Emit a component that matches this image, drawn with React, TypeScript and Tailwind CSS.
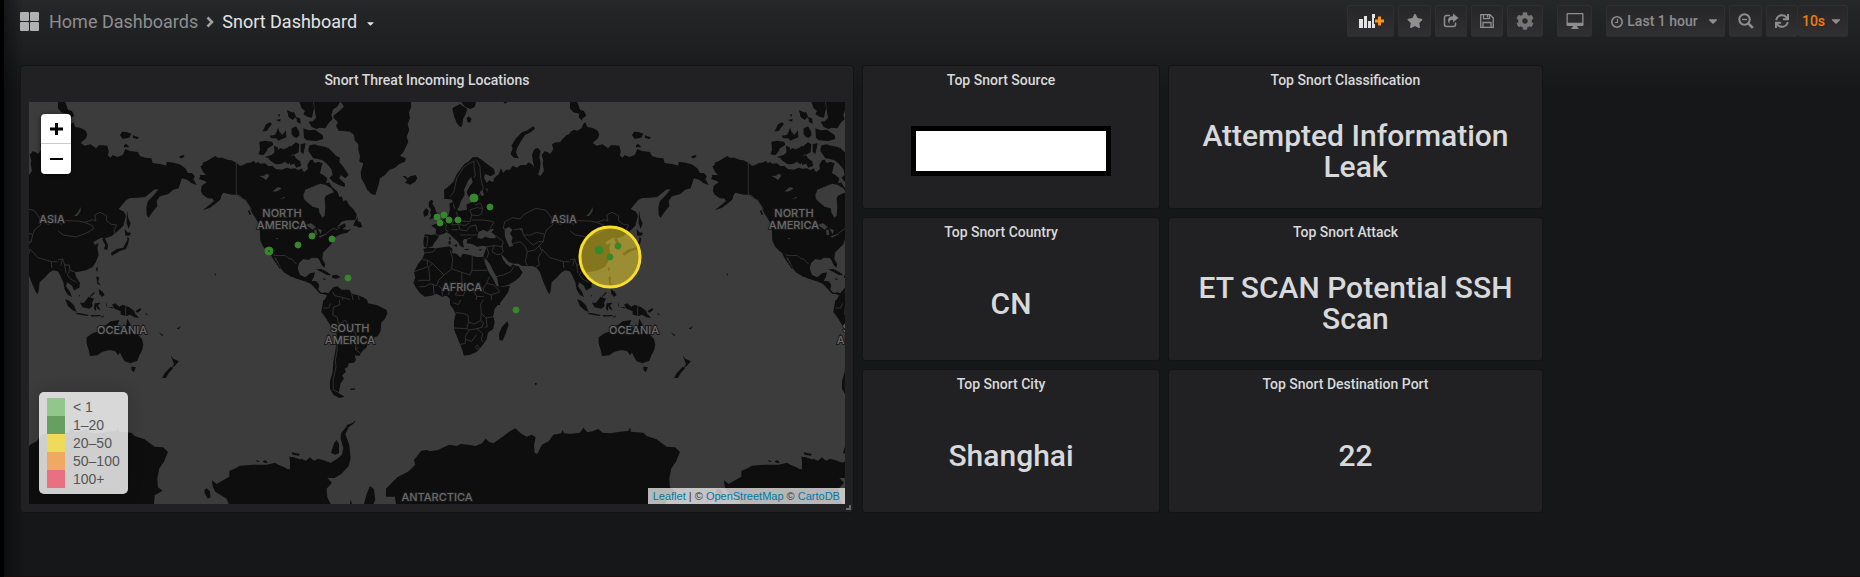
import React from "react";
import { FaStar, FaCog, FaCaretDown, FaSync } from "react-icons/fa";

type Point = { x: number; y: number; r: number };

const markers: Point[] = [
  { x: 269, y: 251, r: 4 },
  { x: 298, y: 245, r: 3 },
  { x: 312, y: 236, r: 3 },
  { x: 332, y: 239, r: 3 },
  { x: 348, y: 278, r: 3 },
  { x: 474, y: 198, r: 4 },
  { x: 490, y: 207, r: 3 },
  { x: 437, y: 217, r: 3 },
  { x: 444, y: 215, r: 3 },
  { x: 449, y: 220, r: 3 },
  { x: 440, y: 223, r: 3 },
  { x: 458, y: 220, r: 3 },
  { x: 516, y: 310, r: 3 },
  { x: 599, y: 250, r: 4 },
  { x: 618, y: 246, r: 3 },
  { x: 610, y: 257, r: 3 },
];

const legend = [
  { label: "< 1", swatch: "bg-[#92c78b]" },
  { label: "1–20", swatch: "bg-[#679f60]" },
  { label: "20–50", swatch: "bg-[#eedb59]" },
  { label: "50–100", swatch: "bg-[#f1a961]" },
  { label: "100+", swatch: "bg-[#e9707f]" },
];

type Tile = { x: number; y: number; land: string; water?: string; borders?: string };

// Coastlines are stored in third-of-a-pixel units, one tile per map region.
// Neighbouring tiles overlap slightly so that no seam shows between them.
const tiles: Tile[] = [
  {
    // Alaska, western Canada and the western United States
    x: 20,
    y: 95,
    land:
      "M541 214L549 210 547 204 565 196 577 188 586 183 592 188 607 188 622 194 635 196 649 203 660 212 668 211 680 204 690 203 702 198 707 204 716 201 720 206 735 205 745 213 757 213 768 222 785 224 800 218 814 222V545L800 537 790 530 782 518 775 503 768 489 757 479 742 468 730 455 721 437 720 410 717 388 706 368 695 352 688 332 677 317 662 307 648 299 636 299 622 296 610 293 604 302 601 314 586 326 570 338 549 345 568 330 582 318 578 311 562 309 547 298 543 288 545 272 560 262 555 258 536 252 541 246 539 240 558 240 550 232Z" +
      "M750 474L760 480 768 496 776 510 784 523 778 520 766 502 757 488Z" +
      "M718 140L735 137 757 140 760 150 744 160 738 172 730 181 715 178 720 165Z" +
      "M762 152L772 156 776 166 780 158 790 163 800 160 810 152 822 158 820 175 812 185 817 196 805 208 794 200 783 207 768 208 752 198 745 190 735 186 755 180 764 172Z" +
      "M748 122L765 120 775 98 777 108 787 120 798 106 799 127 788 131 775 137 768 130 754 130Z" +
      "M728 109L738 88 750 82 756 87 747 98 740 108ZM801 45L822 55 826 68 818 74 806 67ZM768 75L782 72 780 80ZM773 59L781 57 777 65ZM815 100L825 96 834 104 835 122 822 126 815 118ZM688 345L693 358 689 360 684 348Z" +
      "M583 535l6 3-2 4z",
    water:
      "M718 243L732 242 740 236 748 240 744 248 738 255 730 249ZM747 293L760 287 772 277 785 279 778 286 766 290 758 288ZM778 311L795 306 795 309ZM810 330L817 319 815 330ZM768 430h6v2h-6z",
    borders: "M649 203V299L660 303 668 312 676 315 684 328 694 342M760 480L775 482 795 481 803 488 810 492",
  },
  {
    // Eastern North America, the Atlantic, Europe, Africa and western Asia
    x: 290,
    y: 95,
    land:
      "M0 222L15 220 25 226 35 220 42 232 54 222 52 210 60 195 68 194 74 204 85 200 98 205 95 214 90 235 100 240 112 250 108 265 118 262 126 276 143 290 148 306 155 304 160 318 170 316 177 330 190 342 200 358 198 372 190 376 170 376 155 380 138 400 150 392 165 385 168 394 158 402 172 405 184 402 172 413 152 418 140 424 130 430 124 448 112 460 99 473 97 492 106 508 103 518 95 510 88 494 82 489 66 488 55 495 40 492 27 505 23 520 30 540 46 547 60 535 75 532 72 545 65 558 80 559 88 570 85 584 95 594 108 592 118 597 114 603 104 598 90 596 75 580 63 567 48 560 30 554 14 549 0 543Z" +
      "M57 152L72 148 88 152 104 155 116 160 128 172 138 182 150 188 148 200 160 215 176 240 166 250 152 240 148 250 165 266 164 276 146 270 128 260 118 248 128 240 124 222 112 208 98 196 84 192 70 190 62 178 55 168Z" +
      "M190 392L195 378 204 366 203 378 212 382 217 396 208 398 200 394Z" +
      "M28 21H70L72 40 66 68 54 66 40 58 45 48 35 40Z" +
      "M72 21H150L142 35 130 42 124 60 128 72 116 84 106 100 88 98 80 102 65 96 56 80 70 78 78 68 74 45ZM40 100L56 106 75 104 98 120 100 132 80 138 50 136 42 128ZM5 152L18 142 28 148 26 172 10 180ZM32 148L47 144 44 160 40 178 32 170ZM0 185L12 180 20 192 30 198 34 212 20 218 12 206 0 210ZM6 102L18 94 28 110 28 122 18 130 8 118ZM0 60L12 50 18 65 8 74ZM18 66l12 4 2 16-10-4z" +
      "M78 523L95 522 112 531 124 541 110 540 96 532ZM127 541L140 539 152 547 138 551 126 548ZM98 550l12 2-8 3z" +
      "M152 21H363L364 35 357 52 360 70 353 88 358 105 350 125 355 140 346 160 340 172 330 182 348 190 345 200 328 207 315 218 298 225 285 240 270 250 265 272 256 300 244 297 232 285 224 268 214 250 212 232 220 205 208 200 210 182 205 165 205 148 194 136 192 120 180 110 160 108 146 107 138 92 144 82 132 70 130 62 148 48 162 35Z" +
      "M338 244L346 242 352 250 362 244 376 240 382 248 376 260 360 269 345 263 352 255Z" +
      "M100 630L105 612 118 590 130 577 142 574 155 584 178 584 185 596 205 601 222 608 232 615 232 630Z" +
      "M487 40L500 32 510 27 520 34 532 42 526 60 520 70 516 94 510 96 500 84 492 62ZM514 21H558L554 36 542 42 526 36ZM530 68L537 64 545 72 540 84 532 80ZM640 21h12l-6 5z" +
      "M662 178L668 160 664 152 678 130 696 112 712 106 730 94 735 101 722 112 705 120 692 140 682 158 678 172 686 190 672 188Z" +
      "M463 312L462 285 478 272 490 260 500 238 512 222 524 206 535 200 548 187 562 186 575 194 590 206 612 222 615 236 602 244 585 236 582 248 590 264 598 256 610 262 612 250 626 238 633 220 640 234 648 224 660 224 668 212 680 218 692 210 708 210 716 202 728 210 734 220 730 205 726 180 732 164 742 158 752 168 748 186 752 204 750 222 744 240 752 242 762 228 758 206 760 196 755 180 765 168 782 176 790 162 786 148 798 142 810 142 818 132 830 120 844 114V530L826 526 815 532 800 548 785 562 782 588 778 598 772 588 760 560 750 532 740 518 728 513 695 513 683 507 692 524 698 532 690 545 675 558 655 570 627 576 618 558 605 535 592 508 584 494 580 484 590 455 580 452 562 455 548 448 530 445 532 432 522 432 518 440 522 458 510 452 504 438 494 428 482 408 486 414 500 425 516 442 510 450 506 442 492 430 480 418 470 412 462 416 448 420 444 430 432 445 428 454 412 458 402 455 400 440 404 418 425 420 437 418 438 402 424 392 436 386 446 384 460 372 475 362 480 344 478 326 488 320 492 340 508 348 530 344 530 328 546 322 570 312 550 308 535 304 530 292 538 275 548 262 544 246 535 256 528 272 522 284 524 300 514 316 506 338 498 346 492 330 486 314 474 312Z" +
      "M417 320L424 314 430 318 427 326 435 338 438 350 448 358 442 368 428 370 417 374 424 362 420 352 424 345 416 334ZM400 350L408 340 416 346 414 360 402 366Z" +
      "M490 450L502 448 500 456ZM476 438h6v10h-6zM478 426h4v8h-4zM524 462h12v3h-12zM565 464l12-3-6 6z" +
      "M400 462L415 458 440 460 478 454 488 462 485 474 500 476 512 488 518 476 540 480 560 486 580 486 584 500 596 530 612 556 620 574 635 576 660 572 655 590 644 606 630 625V630H480L480 612 470 602 455 605 440 596 425 602 404 605 390 594 378 578 370 564 376 548 372 530 384 508 398 490 404 474Z",
    water:
      "M40 300L46 284 66 276 80 270 92 266 108 270 124 280 132 292 120 296 108 302 104 310 106 335 104 362 97 368 88 352 86 340 68 335 52 322 42 312ZM100 216l8 10-6 8z" +
      "M562 428L565 412 580 404 592 410 602 402 612 402 604 412 618 422 616 430 600 430 586 425 574 432Z" +
      "M644 402L656 396 668 404 660 415 668 428 664 440 670 452 658 456 650 438 645 425Z" +
      "M634 478L645 488 656 500 670 506 686 506 695 513 680 514 668 508 662 516 648 506 638 492Z" +
      "M586 490L600 508 612 532 622 550 626 574 620 572 608 548 594 526 584 500ZM570 290l8-4 4 14-8 4zM586 282l6-2 2 10zM688 402l8-2-2 8zM48 390L62 384 78 396 68 404ZM72 404L80 404 82 420 74 420ZM82 400L96 406 92 418ZM86 424L108 416 110 418 90 428Z",
    borders:
      "M0 490L8 494 18 506M108 416L130 400 142 404 150 396M480 305L492 290 500 250 520 218 540 204 552 198M552 198L552 215 556 240 552 248M560 194L570 215 572 250 580 280 566 302" +
      "M500 350L503 368 492 375 485 390M503 368L515 378 540 380 545 360 540 345M540 345L560 338 578 340 575 356 565 362 545 360M578 340L572 325 555 330M545 375L580 375 600 378 612 382 600 400M485 390L505 388 525 392 538 384M505 388L510 404 530 408 540 394 558 390 562 410M485 404L505 404M510 420L530 420 560 420M460 378L470 390 466 404 475 410M404 424L414 426 410 455M436 418L446 422M532 432L545 428M530 345L526 332" +
      "M640 400L644 380 668 368 690 372 702 358 718 350 738 340 768 346 778 360 788 372 802 385 812 388M812 388L826 380 840 384M784 372L788 390 772 402 764 418 740 412 722 420 700 420 696 400 672 405M700 420L712 435 730 450 745 440 760 440 764 418M668 446L690 440 704 452 712 470 706 500 712 512M712 470L735 465 748 452 760 440M748 452L756 470 744 488 748 510 738 516M756 462L780 488 820 500 840 500M820 500L822 520M618 422L640 440 636 455 640 470 632 478M590 455L612 452 638 455M590 455L596 475 590 490M612 452L606 470 620 478 632 478M618 545L640 540 662 530 672 514M660 415L640 400" +
      "M404 474L430 470 438 460M398 494L412 496 412 516 372 530M412 496L428 506 462 540 485 522 488 490 480 465M428 506L416 516 420 556 384 556M462 540L446 556 440 572 420 566 405 575 388 575M485 522L515 532 540 540 546 526 547 482M547 526H592M515 532L516 560 505 578 480 575 455 580 446 572M516 560L526 586 548 582 560 575 580 580 590 565 598 545M505 578L496 600 520 602 526 586M590 565L612 570 630 590 604 600 582 592 580 580M604 600L606 630M548 582L560 604 582 605M455 580L458 602M430 570L432 598M480 575L476 600M560 604L556 625M128 590L134 602 160 608 154 622M185 596L190 618M205 601L208 616M160 608L180 614",
  },
  {
    // Eastern Siberia
    x: 570,
    y: 95,
    land:
      "M0 112L12 104 22 107 35 100 40 86 46 82 52 96 66 98 82 106 88 118 84 130 68 144 80 152 98 148 114 160 124 150 148 152 152 168 150 182 158 188 164 180 178 186 194 180 202 162 216 168 240 171 246 183 262 188 280 190 284 204 310 208 325 212 326 200 346 203 365 208 382 220 390 234 402 234 411 244 406 252 416 270 400 264 388 254 372 250 368 262 362 280 346 284 330 298 306 304 296 318 298 334 284 350 272 368 266 360 265 338 270 318 286 302 302 282 288 284 262 306 240 308 216 309 204 316 182 342 198 350 204 362 196 392 180 408 160 424 142 430 130 428 118 434 106 442 110 450 122 444 118 458 122 480 114 500 104 516 84 526 62 530 50 532 56 548 66 564 64 578 48 586 42 572 28 562 24 574 36 590 42 606 30 600 20 584 16 562 6 540 0 530Z" +
      "M186 120L192 110 206 111 220 116 214 128 194 132ZM224 121L242 127 240 133 226 129ZM198 150L206 147 214 157 198 157ZM362 185L376 180 380 186 370 190Z" +
      "M0 21H22L30 44 42 48 49 62 40 68 34 76 26 66 28 56 10 52 0 40Z" +
      "M132 432L140 428 150 450 148 465 138 462 142 450ZM158 475L176 462 196 458 208 435 208 426 214 430 210 448 204 462 186 468 162 482ZM200 402L208 412 220 414 214 422 202 422ZM207 346L211 370 218 385 212 402 206 385Z" +
      "M116 516L120 518 118 530 114 526ZM115 545L123 545 121 562 130 572 118 566ZM122 582L134 590 140 600 132 606 124 596ZM108 590l-12 14 2 2 12-12zM62 600h4v6z",
    borders:
      "M0 384L12 388 24 376 44 378 60 378 80 382 104 374 114 378 110 360 126 352 146 362 146 378 160 388 176 390 168 406 172 418M0 408L16 420 54 426 90 412 108 400 100 390 80 382M0 494L14 492 20 510 34 510 36 526 50 530M14 492L8 512M36 526L28 540 38 552 56 562M20 510L24 534",
    water: "M48 364L60 352 68 336 68 348 58 362Z",
  },
  {
    // Oceania
    x: 532,
    y: 300,
    land:
      "M135 -2L148 2 162 16 170 36 160 32 144 18ZM165 38L182 40 206 45 204 48 172 43ZM180 8L192 8 206 -10 222 -4 216 8 218 18 208 26 188 22ZM224 10L242 8 234 16 242 30 234 28 229 18 228 34 222 26ZM212 46l30-1v3l-28 2zM240 52l12-6-2 6zM258 6l4 14-4-4zM262 22h22l-8 3z" +
      "M276 14L286 10 298 20 308 14 328 22 342 32 346 42 358 54 344 52 330 44 320 48 302 44 302 34 284 26ZM346 34L362 24 364 30 352 38ZM376 38l8 6-4 2zM400 50l8 6zM425 72l6 8zM470 86L484 78 476 88ZM416 96L430 106 426 108Z" +
      "M200 112L218 100 236 94 248 80 262 72 272 64 298 60 292 76 310 88 318 78 322 56 332 74 336 86 350 98 366 118 370 134 366 152 358 166 352 182 332 190 314 184 306 170 300 158 294 166 286 154 268 150 246 156 232 166 210 168 206 150 200 130Z" +
      "M333 200L348 201 342 216 336 212ZM452 166L460 176 477 184 464 198 455 204 462 192ZM452 200L460 204 446 220 438 234 426 233 434 220Z",
    borders: "M317 20V48",
  },
  {
    // South America, southern Africa and Antarctica around the prime meridian
    x: 290,
    y: 300,
    land:
      "M100 0H230L234 10 262 16 290 30 292 42 284 58 274 68 272 92 264 108 246 114 236 124 230 142 218 152 208 168 194 166 198 180 192 188 176 190 174 200 164 206 168 216 156 226 162 236 152 250 148 270 146 280 164 290 148 294 130 284 120 266 120 244 128 216 130 186 136 154 140 120 138 94 124 82 110 58 94 36Z" +
      "M180 266l16-1-2 4-12 1zM480 0H634L628 10 614 26 610 48 614 66 610 86 594 98 590 118 576 138 560 156 540 164 522 167 516 148 506 122 492 88 492 62 497 42 488 24 480 14ZM652 64L656 74 648 98 638 122 628 120 627 102 635 82ZM735 249h5v5h-5z" +
      "M0 470L16 474 22 486 34 476 48 482 60 472 72 482 84 476 98 480 122 488 142 476 156 464 160 444 152 416 153 400 166 384 172 374 186 370 198 360 192 370 176 382 166 402 178 436 182 474 176 498 154 522 134 534 112 534 126 548 110 566 112 592 122 612H0ZM222 612L230 582 240 558 252 568 256 600 250 612ZM123 458L133 428 140 420 147 432 147 460 134 464ZM180 612l2-14 4 14z" +
      "M288 590V566L322 532 356 514 376 494 372 480 394 452 410 450 420 454 444 450 456 444 478 434 500 438 512 432 536 434 556 438 576 430 587 416 598 426 610 430 638 410 660 394 676 385 692 400 710 410 726 404 737 412 732 436 734 458 742 462 756 434 776 424 790 404 814 400 818 390 822 400 844 402V612H318L315 590Z",
    borders:
      "M138 94L142 150 136 180 138 200 130 240 130 270 148 278M138 94L146 74 142 52 128 44 130 22 150 14 148 0M100 24L116 24 122 10M146 74L166 60 180 84 196 98 200 126 196 148 212 160M196 148L206 142M492 84L532 86M497 38L520 40 534 46 536 66 530 86 538 90 526 108 526 130 508 134M536 66L552 72 572 62 580 68 576 82 560 86 538 90M560 86L578 100 574 120 580 126M526 118L545 124 560 104M572 62L574 40 588 54 612 50M574 40L572 12 580 0M588 54L592 80 584 82M490 8L505 14 512 0M556 140L562 135 568 142 562 148Z",
  },
  {
    // Antarctica, Pacific sector
    x: 20,
    y: 300,
    land:
      "M576 541L590 552 604 544 628 530 628 512 644 506 660 497 700 494 740 494 765 488 778 496 790 500 804 508 816 508 820 498 810 484 808 470 820 472 840 478V612H626L620 596 586 575 578 560ZM553 570L560 565 570 574 572 592 564 596 555 582ZM815 457L840 462 836 467 818 464ZM708 480l12 4-8 2zM728 484l8-4 8 8-10 1z",
  },
  {
    // Antarctica, Indian Ocean sector
    x: 570,
    y: 300,
    land:
      "M0 402L30 398 40 383 52 397 68 394 85 387 98 398 120 400 150 395 175 393 180 382 183 395 220 398 230 408 260 418 290 440 316 442 330 456 318 485 304 505 298 536 300 562 314 572 290 586 288 612H0Z",
  },
];

function World() {
  return (
    <g id="world">
      {tiles.map((t, i) => (
        <g key={i} transform={`translate(${t.x} ${t.y}) scale(0.33333)`}>
          <path d={t.land} fill="#0e0e0e" />
          {t.water && <path d={t.water} fill="#3c3c3c" />}
          {t.borders && <path d={t.borders} fill="none" stroke="#363636" strokeWidth="2.6" strokeLinejoin="round" />}
        </g>
      ))}
      <g fill="#6a6a6a" stroke="#1a1a1a" strokeWidth="2" paintOrder="stroke" textAnchor="middle" fontSize="11" fontWeight="500" fontFamily="Inter, sans-serif">
        <text x="282" y="217">NORTH</text>
        <text x="282" y="229">AMERICA</text>
        <text x="350" y="332">SOUTH</text>
        <text x="350" y="344">AMERICA</text>
        <text x="462" y="291">AFRICA</text>
        <text x="564" y="223">ASIA</text>
        <text x="634" y="334">OCEANIA</text>
        <text x="437" y="501">ANTARCTICA</text>
      </g>
    </g>
  );
}

function ThreatMap() {
  return (
    <div className="relative min-h-0 flex-1 overflow-hidden bg-[#3c3c3c] font-['Liberation_Sans',sans-serif]">
      <svg className="absolute inset-0 h-full w-full" viewBox="29 102 816 402" preserveAspectRatio="xMidYMid slice" role="img" aria-label="World map of threat locations">
        <World />
        <use href="#world" x="-512" />
        <use href="#world" x="512" />
        <circle cx="610" cy="257" r="30" fill="#fade2a" fillOpacity="0.5" stroke="#fade2a" strokeWidth="3" />
        {markers.map((m, i) => (
          <circle key={i} cx={m.x} cy={m.y} r={m.r} fill="#37872d" stroke="#37872d" strokeWidth="1" />
        ))}
        <circle cx="269" cy="251" r="1" fill="#1f4a1b" />
      </svg>
      <div className="absolute left-3 top-3 flex flex-col overflow-hidden rounded-sm text-black shadow-[0_1px_5px_rgba(0,0,0,0.65)]">
        <button aria-label="Zoom in" className="flex h-[30px] w-[30px] items-center justify-center border-b border-[#cccccc] bg-white">
          <svg width="14" height="14" viewBox="0 0 14 14"><path d="M7.500 1v12M1 7h13" stroke="#000" strokeWidth="3" /></svg>
        </button>
        <button aria-label="Zoom out" className="flex h-[30px] w-[30px] items-center justify-center bg-white">
          <svg width="14" height="14" viewBox="0 0 14 14"><path d="M1 7h13" stroke="#000" strokeWidth="2" /></svg>
        </button>
      </div>
      <ul className="absolute bottom-[10px] left-[10px] rounded-[5px] bg-white/80 px-2 py-[6px] text-[14px] leading-[18px] text-[#555555] shadow-[0_0_15px_rgba(0,0,0,0.2)]">
        {legend.map((l) => (
          <li key={l.label} className="flex">
            <span className={`mr-2 w-[18px] ${l.swatch}`} />
            {l.label}
          </li>
        ))}
      </ul>
      <div className="absolute bottom-0 right-0 bg-white/70 px-[5px] text-[11px] leading-4 text-[#333333]">
        <a href="#leaflet" className="text-[#0078a8]">Leaflet</a> | © <a href="#osm" className="text-[#0078a8]">OpenStreetMap</a> ©{" "}
        <a href="#cartodb" className="text-[#0078a8]">CartoDB</a>
      </div>
    </div>
  );
}

function Panel({ title, className = "", children }: { title: string; className?: string; children: React.ReactNode }) {
  return (
    <section className={`relative flex min-w-0 flex-col rounded-[3px] bg-[#212124] shadow-[0_0_0_1px_#141414] ${className}`}>
      <h2 className="pr-5 pt-1 text-center text-[14px] font-medium leading-5 text-[#d8d9da]">{title}</h2>
      {children}
    </section>
  );
}

function Stat({ title, className, value }: { title: string; className: string; value?: string }) {
  return (
    <Panel title={title} className={className}>
      <div className="flex flex-1 items-center justify-center px-5 pt-1 text-center text-[30px] font-medium leading-[31px] text-[#d8d9da]">
        {value ?? <div className="h-[50px] w-[200px] border-[5px] border-black bg-white" />}
      </div>
    </Panel>
  );
}

function NavButton({ label, className, children }: { label: string; className: string; children: React.ReactNode }) {
  return (
    <button
      aria-label={label}
      className={`flex h-8 items-center justify-center rounded-[2px] border border-[#2f2f32] bg-linear-to-b from-[#262628] to-[#303033] text-[#8e8e8e] ${className}`}
    >
      {children}
    </button>
  );
}

export default function App() {
  return (
    <div className="flex min-h-screen bg-[#161719] font-[Roboto,sans-serif] text-[#d8d9da]">
      <div className="w-1 bg-black" />
      <div className="min-w-0 flex-1 border-b border-[#1d0c0c] bg-[linear-gradient(90deg,rgba(0,0,0,0.4),transparent_20px),linear-gradient(180deg,#262729_0px,#161719_92px)]">
        <header className="flex h-[66px] items-start pl-4 pr-3 pt-[5px]">
          <nav className="flex h-8 items-center text-[18px]">
            <svg className="mr-[10px]" width="19" height="19" viewBox="0 0 19 19" fill="#b0b1b2">
              <rect width="9" height="9" rx="1" />
              <rect x="10" width="9" height="9" rx="1" />
              <rect y="10" width="9" height="9" rx="1" />
              <rect x="10" y="10" width="9" height="9" rx="1" />
            </svg>
            <a href="#home" className="text-[#8e8e8e]">Home Dashboards</a>
            <svg className="mx-2 mt-[2px]" width="8" height="12" viewBox="0 0 8 12" fill="none">
              <path d="M1.500 1.500L6 6 1.500 10.500" stroke="#a0a0a0" strokeWidth="2.600" />
            </svg>
            <button className="flex items-center text-[#e3e3e3]">
              Snort Dashboard
              <FaCaretDown className="ml-2 mt-1 text-[11px]" />
            </button>
          </nav>
          <div className="ml-auto flex gap-1">
            <NavButton label="Add panel" className="w-[47px]">
              <svg width="26" height="16" viewBox="0 0 26 16">
                <path d="M1 6h4v9h-4zM6 3h3v12h-3zM10 8h3v7h-3zM14 1h3v14h-3z" fill="#e3e3e3" />
                <path d="M19 2h5v3h3v6h-3v3h-5v-3h-3v-6h3z" fill="#2a2a2c" />
                <path d="M20 3.500h3v3h3v3h-3v3h-3v-3h-3v-3h3z" fill="#f79520" />
              </svg>
            </NavButton>
            <NavButton label="Mark as favorite" className="w-[33px]"><FaStar size={16} /></NavButton>
            <NavButton label="Share dashboard" className="w-8">
              <svg width="16" height="16" viewBox="0 0 16 16" fill="none">
                <path d="M7 2.500H3.500a2 2 0 0 0-2 2v7a2 2 0 0 0 2 2h7a2 2 0 0 0 2-2V9.500" stroke="currentColor" strokeWidth="1.500" />
                <path d="M10 0.500L15.500 5 10 9.300V6.800C7 6.800 6 8 6.500 11 4 8 4.500 3.300 10 3.200z" fill="currentColor" />
              </svg>
            </NavButton>
            <NavButton label="Save dashboard" className="w-8">
              <svg width="14" height="14" viewBox="0 0 14 14" fill="none" stroke="currentColor" strokeWidth="1.300">
                <path d="M.7.700h9.300l3.300 3.300v9.300H.7zM3.500.700v4h6v-4M3 13V8.500h8V13M7.500 1v2.500" />
              </svg>
            </NavButton>
            <NavButton label="Dashboard settings" className="w-9"><FaCog size={18} className="text-[#767676]" /></NavButton>
            <NavButton label="Cycle view mode" className="ml-[10px] w-[35px]">
              <svg width="18" height="16" viewBox="0 0 18 16" fill="currentColor">
                <path fillRule="evenodd" d="M1.500 0h15a1 1 0 0 1 1 1v11a1 1 0 0 1-1 1h-5.500l.5 1.500h1V16h-7v-1.500h1l.5-1.500h-5.500a1 1 0 0 1-1-1v-11a1 1 0 0 1 1-1zM1.800 1.300v8.500h14.400v-8.500z" />
              </svg>
            </NavButton>
            <NavButton label="Time range" className="ml-[10px] w-[119px]">
              <svg className="mr-1 mt-px" width="12" height="12" viewBox="0 0 12 12" fill="none" stroke="currentColor" strokeWidth="1.600">
                <circle cx="6" cy="6" r="5.200" />
                <path d="M6.500 3v3.500H4" strokeWidth="1.200" />
              </svg>
              <span className="text-[14px] font-medium">Last 1 hour</span>
              <FaCaretDown className="ml-2" size={14} />
            </NavButton>
            <NavButton label="Zoom out time range" className="w-[33px]">
              <svg width="16" height="16" viewBox="0 0 16 16" fill="none" stroke="currentColor">
                <circle cx="6.500" cy="6.500" r="5.200" strokeWidth="2" />
                <path d="M10.300 10.300L14.800 14.800" strokeWidth="2.600" />
                <path d="M4 6.500h5" strokeWidth="1.400" />
              </svg>
            </NavButton>
            <div className="flex">
              <NavButton label="Refresh" className="w-8"><FaSync size={14} /></NavButton>
              <NavButton label="Refresh interval" className="w-[50px] border-l-0">
                <span className="text-[14px] font-medium text-[#eb7b18]">10s</span>
                <FaCaretDown className="ml-1" size={14} />
              </NavButton>
            </div>
          </div>
        </header>
        <main className="grid grid-cols-24 grid-rows-[repeat(3,142px)] gap-[10px] pb-16 pl-[17px] pr-3">
          <Panel title="Snort Threat Incoming Locations" className="col-span-11 row-span-3 px-2 pb-2 [&>h2]:mb-3">
            <ThreatMap />
            <svg className="absolute bottom-[2px] right-[2px]" width="5" height="5" viewBox="0 0 5 5"><path d="M3 0h2v5H0V3h3z" fill="#6a6a6c" /></svg>
          </Panel>
          <Stat title="Top Snort Source" className="col-span-4" />
          <Stat title="Top Snort Classification" className="col-span-5" value="Attempted Information Leak" />
          <Stat title="Top Snort Country" className="col-span-4 col-start-12" value="CN" />
          <Stat title="Top Snort Attack" className="col-span-5" value="ET SCAN Potential SSH Scan" />
          <Stat title="Top Snort City" className="col-span-4 col-start-12" value="Shanghai" />
          <Stat title="Top Snort Destination Port" className="col-span-5" value="22" />
        </main>
      </div>
    </div>
  );
}
